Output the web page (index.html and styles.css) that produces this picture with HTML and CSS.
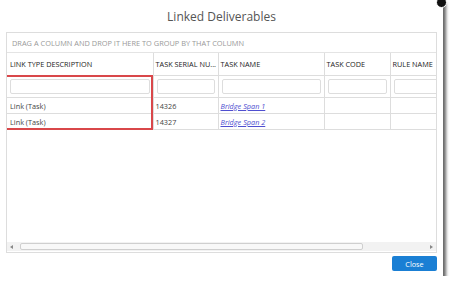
FILE: index.html
```html
<!DOCTYPE html>
<html lang="en">
<head>
    <meta charset="UTF-8">
    <title>Linked Deliverables</title>
    <link rel="stylesheet" href="styles.css">
</head>
<body>

<div class="dialog">
    <span class="close-x"></span>
    <h1 class="dialog-title">Linked Deliverables</h1>

    <div class="grid">
        <div class="group-panel">DRAG A COLUMN AND DROP IT HERE TO GROUP BY THAT COLUMN</div>
        <div class="grid-body">
            <table class="grid-table">
                <colgroup>
                    <col class="c1"><col class="c2"><col class="c3"><col class="c4"><col class="c5">
                </colgroup>
                <thead>
                    <tr class="head-row">
                        <th>LINK TYPE DESCRIPTION</th>
                        <th>TASK SERIAL NU...</th>
                        <th>TASK NAME</th>
                        <th>TASK CODE</th>
                        <th>RULE NAME</th>
                    </tr>
                    <tr class="filter-row">
                        <td><input type="text"></td>
                        <td><input type="text"></td>
                        <td><input type="text"></td>
                        <td><input type="text"></td>
                        <td><input type="text"></td>
                    </tr>
                </thead>
                <tbody>
                    <tr>
                        <td>Link (Task)</td>
                        <td>14326</td>
                        <td><a href="#">Bridge Span 1</a></td>
                        <td></td>
                        <td></td>
                    </tr>
                    <tr>
                        <td>Link (Task)</td>
                        <td>14327</td>
                        <td><a href="#">Bridge Span 2</a></td>
                        <td></td>
                        <td></td>
                    </tr>
                </tbody>
            </table>
            <!-- annotation around the first column -->
            <div class="highlight"></div>
        </div>
        <div class="hscroll">
            <span class="arrow left"></span>
            <div class="thumb"></div>
            <span class="arrow right"></span>
        </div>
    </div>

    <div class="dialog-footer">
        <button type="button" class="close-btn">Close</button>
    </div>
</div>

</body>
</html>
```

FILE: styles.css
```css
body {
    margin: 0;
    background-color: #fff;
    font-family: "Open Sans", Arial, sans-serif;
}

.dialog {
    position: relative;
    width: 443px;
    height: 276px;
    padding: 0 6px;
    box-sizing: border-box;
    background-color: #fff;
    box-shadow: 3px 3px 3px rgba(0, 0, 0, 0.6);
    display: flex;
    flex-direction: column;
}

.close-x {
    position: absolute;
    top: -3px;
    right: -4px;
    width: 9px;
    height: 9px;
    border-radius: 50%;
    background-color: #111;
    border: 1px solid #fff;
}

.dialog-title {
    margin: 0;
    height: 32px;
    line-height: 34px;
    text-align: center;
    font-size: 12px;
    font-weight: normal;
    color: #555;
}

.grid {
    height: 221px;
    border: 1px solid #ddd;
    box-sizing: border-box;
    display: flex;
    flex-direction: column;
}

.group-panel {
    height: 19px;
    line-height: 20px;
    padding-left: 5px;
    font-size: 7.4px;
    color: #999;
    border-bottom: 1px solid #e4e4e4;
    white-space: nowrap;
}

.grid-body {
    position: relative;
    flex: 1;
    overflow: hidden;
}

.grid-table {
    border-collapse: collapse;
    table-layout: fixed;
    width: 460px;
    font-size: 7.3px;
    color: #444;
}

.c1 { width: 146px; }
.c2 { width: 65px; }
.c3 { width: 106px; }
.c4 { width: 66px; }
.c5 { width: 77px; }

.grid-table th {
    height: 22px;
    padding: 0 0 0 2px;
    text-align: left;
    font-weight: normal;
    color: #222;
    border-right: 1px solid #ddd;
    border-bottom: 1px solid #ddd;
    white-space: nowrap;
    overflow: hidden;
}

.grid-table td {
    padding: 0 0 0 2px;
    border-right: 1px solid #ddd;
    border-bottom: 1px solid #ddd;
    white-space: nowrap;
    overflow: hidden;
}

.grid-table th:first-child,
.grid-table td:first-child {
    padding-left: 3px;
}

.filter-row td {
    height: 21px;
    padding: 0 3px;
}

.filter-row input {
    display: block;
    width: 100%;
    height: 15px;
    box-sizing: border-box;
    border: 1px solid #ddd;
    border-radius: 2px;
    background-color: #fff;
}

.grid-table tbody td {
    height: 15px;
}

.grid-table a {
    color: #4f4fd0;
    font-style: italic;
}

.highlight {
    position: absolute;
    left: -2px;
    top: 22px;
    width: 144px;
    height: 51px;
    border: 2px solid #d9474a;
}

.hscroll {
    height: 9px;
    margin: 0 0 1px 0;
    background-color: #f2f2f2;
    display: flex;
    align-items: center;
    padding: 0 3px;
}

.arrow {
    width: 0;
    height: 0;
    border-top: 2.5px solid transparent;
    border-bottom: 2.5px solid transparent;
}

.arrow.left {
    border-right: 3px solid #888;
}

.arrow.right {
    margin-left: auto;
    border-left: 3px solid #888;
}

.thumb {
    width: 343px;
    height: 7px;
    margin-left: 7px;
    box-sizing: border-box;
    border: 1px solid #cfcfcf;
    border-radius: 2px;
    background-color: #f8f8f8;
}

.dialog-footer {
    display: flex;
    justify-content: flex-end;
    padding-top: 3px;
}

.close-btn {
    width: 45px;
    height: 15px;
    padding: 0;
    border: none;
    border-radius: 2px;
    background-color: #1a7fd4;
    color: #fff;
    font-family: "Open Sans", Arial, sans-serif;
    font-size: 7.3px;
}
```
